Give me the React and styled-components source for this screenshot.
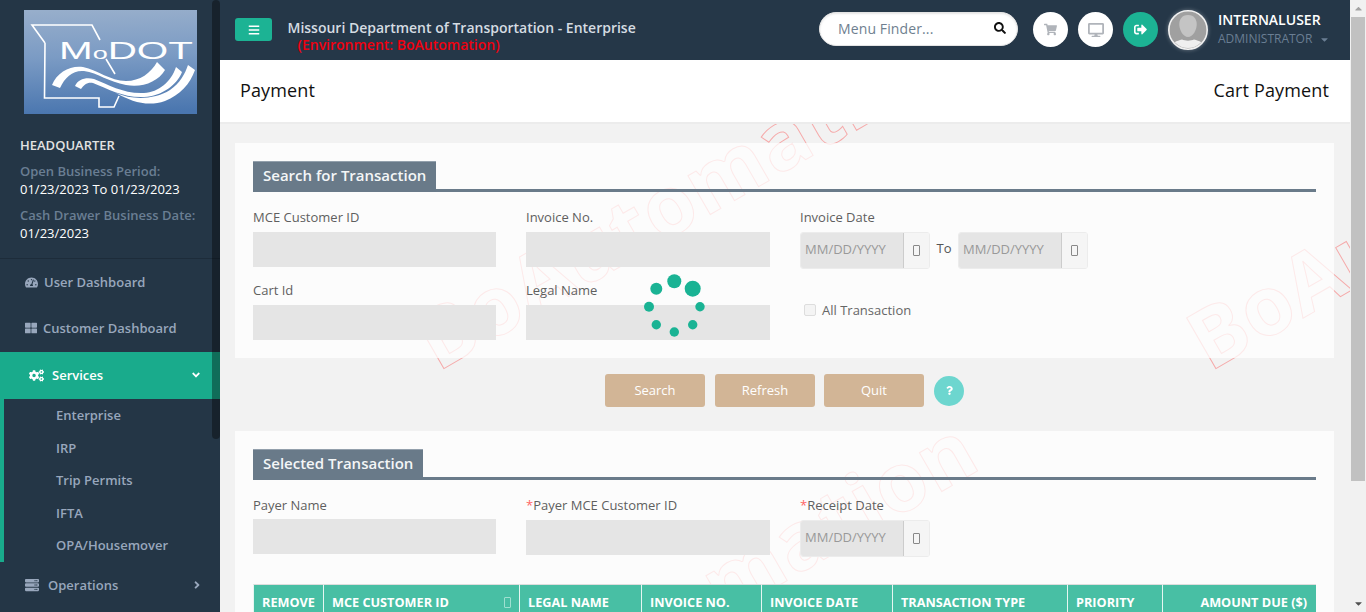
import React from "react";
import styled, { createGlobalStyle } from "styled-components";
import { FaTachometerAlt, FaThLarge, FaCogs, FaServer, FaAngleDown, FaAngleRight, FaBars, FaSearch, FaShoppingCart, FaDesktop, FaSignOutAlt, FaCaretDown, FaCaretUp, FaQuestion } from "react-icons/fa";

const Global = createGlobalStyle`
  html, body { margin: 0; padding: 0; height: 100%; overflow: hidden; }
  body { font-family: "Open Sans", "Liberation Sans", sans-serif; }
  * { box-sizing: border-box; }
`;

const Shell = styled.div`
  display: flex; width: 1366px; height: 612px; overflow: hidden; background: #f2f2f2;
`;

/* ---------- sidebar ---------- */
const Side = styled.aside`
  position: relative; flex: 0 0 220px; height: 612px; background: #243646; overflow: hidden;
`;
const SideScroll = styled.div`
  position: absolute; left: 212px; top: 0; width: 8px; height: 439px; z-index: 3;
  background: rgba(0,0,0,.36); border-radius: 4px;
`;
const LogoWrap = styled.div`
  padding: 10px 0 0 24px; height: 114px; line-height: 0;
`;
const Info = styled.div`
  padding: 21px 0 16px 20px; border-bottom: 1px solid #1d2c3a; height: 145px;
`;
const InfoHead = styled.div`
  font-size: 13px; font-weight: 600; color: #e2e2e2; line-height: 20px; margin-bottom: 7px; text-transform: uppercase;
`;
const InfoKey = styled.div`
  font-size: 13px; font-weight: 600; color: #6a7e93; line-height: 18px;
`;
const InfoVal = styled.div`
  font-size: 13px; color: #fff; line-height: 18px; margin-bottom: 8px;
`;
const NavItem = styled.div`
  display: flex; align-items: center; height: 46px; padding-left: 25px;
  font-size: 13px; font-weight: 600; color: #98a7bc;
  svg { flex: none; }
`;
const NavIconGap = styled.span`
  display: inline-flex; width: ${p => p.$w}px; flex: none;
`;
const ActiveItem = styled.div`
  display: flex; align-items: center; height: 47px; padding: 0 0 1px 29px; margin-top: 1px;
  background: #19ab8c; color: #fff; font-size: 13px; font-weight: 600;
`;
const Chevron = styled.span`
  margin-left: auto; margin-right: ${p => p.$mr}px; display: inline-flex; color: ${p => p.$c || "#fff"};
`;
const SubMenu = styled.div`
  border-left: 4px solid #19ab8c; height: 163px;
`;
const SubItem = styled.div`
  height: 32.5px; line-height: 32px; padding-left: 52px;
  font-size: 13px; font-weight: 600; color: #98a7bc;
`;

/* ---------- main ---------- */
const Main = styled.main`
  flex: 0 0 1130px; height: 612px; display: flex; flex-direction: column; overflow: hidden;
`;
const Top = styled.header`
  flex: 0 0 60px; height: 60px; background: #253748; display: flex; align-items: flex-start; padding-left: 15px;
`;
const BurgerBtn = styled.div`
  width: 37px; height: 23px; margin-top: 18px; border-radius: 3px; background: #1cb394; color: #fff;
  display: flex; align-items: center; justify-content: center; flex: none;
`;
const TitleBlock = styled.div`
  margin-left: 15.5px; padding-top: 18px; width: 531.5px; flex: none;
`;
const TitleLine = styled.div`
  font-size: 14px; font-weight: 600; line-height: 19px; color: #d5dce2; white-space: nowrap;
`;
const EnvLine = styled.div`
  font-size: 14px; font-weight: 600; line-height: 16px; color: #f0000f; padding-left: 10px; white-space: nowrap;
`;
const Finder = styled.div`
  width: 199px; height: 34px; margin-top: 12px; flex: none; background: #fff; border-radius: 17px;
  border: 1px solid #e4e4e4; display: flex; align-items: center; padding: 0 11px 2px 18px;
  font-size: 14px; color: #6f7f90; letter-spacing: .12px; box-shadow: inset 0 1px 2px rgba(0,0,0,.1);
`;
const FinderText = styled.span`
  flex: 1;
`;
const RoundBtn = styled.div`
  width: 35px; height: 35px; margin: 12px 0 0 ${p => p.$ml}px; border-radius: 50%; flex: none;
  background: ${p => p.$bg || "#fff"}; color: ${p => p.$c || "#b0b4ba"};
  display: flex; align-items: center; justify-content: center;
`;
const Avatar = styled.div`
  width: 40px; height: 40px; margin: 10px 0 0 10px; flex: none; line-height: 0;
  border-radius: 50%; box-shadow: 0 0 4px rgba(255,255,255,.35);
`;
const UserBlock = styled.div`
  margin-left: 10px; padding-top: 10px; width: 122px; flex: none;
`;
const UserName = styled.div`
  font-size: 14px; font-weight: 600; color: #fff; line-height: 20px;
`;
const UserRole = styled.div`
  display: flex; align-items: center; gap: 7px;
  font-size: 12px; color: #6a7e93; line-height: 18px;
`;
const TitleBar = styled.div`
  flex: 0 0 64px; height: 64px; background: #fff; border-bottom: 2px solid #ececec;
  display: flex; align-items: center; justify-content: space-between; padding: 0 21px 3px 20px;
  font-size: 18px; font-weight: 500; letter-spacing: .14px; color: #111; position: relative; z-index: 2;
`;
const Content = styled.div`
  position: relative; flex: 1; overflow: hidden; padding: 19px 16px 0 15px;
`;
const Watermark = styled.div`
  position: absolute; left: ${p => p.$x}px; top: ${p => p.$y}px; z-index: 0;
  transform-origin: 0 100%; transform: rotate(-30deg); white-space: nowrap;
  font: 700 82px/82px "Open Sans", sans-serif; letter-spacing: 1px;
  color: transparent; -webkit-text-stroke: 1px rgba(255,0,0,.3);
`;
const Card = styled.section`
  position: relative; z-index: 1; background: rgba(255,255,255,.74); padding: 18px 18px ${p => p.$pb || 18}px;
`;
const SectionHead = styled.div`
  height: 31px; display: flex; align-items: flex-start; border-bottom: 3px solid #6a7b8a; margin-bottom: 16px;
`;
const SectionTab = styled.h2`
  margin: 0; height: 31px; padding: 0 10px; background: #697a89; color: #f4f6f7;
  font-size: 15px; font-weight: 600; line-height: 27px; border-top: 1px solid #93a0ac; white-space: nowrap;
`;
const FieldGrid = styled.div`
  display: grid; grid-template-columns: 243px 244px 243px auto; column-gap: 30px; row-gap: 12px;
`;
const Field = styled.div`
  min-width: 0;
`;
const Label = styled.div`
  font-size: 13px; line-height: 18px; color: #5f5f5f; margin-bottom: 6px; white-space: nowrap;
`;
const Star = styled.span`
  color: #f66;
`;
const Input = styled.div`
  height: 35px; background: #e5e5e5; margin-top: ${p => p.$shift || 0}px;
`;
const DateRow = styled.div`
  display: flex; align-items: center;
`;
const DateBox = styled.div`
  width: 130px; height: 37px; display: flex; border-radius: 3px; overflow: hidden; border: 1px solid #ececec; flex: none;
`;
const DateInput = styled.div`
  width: 102px; background: #e5e5e5; color: #999; font-size: 13px; line-height: 33px; padding-left: 4px; white-space: nowrap;
`;
const DateAddon = styled.div`
  flex: 1; background: #f5f5f5; border-left: 1px solid #ccc; display: flex; align-items: center; justify-content: center;
`;
const Tofu = styled.span`
  display: block; width: 7px; height: 11px; border: 1px solid ${p => p.$c || "#888"}; border-radius: 1px;
`;
const ToText = styled.span`
  width: 28px; text-align: center; font-size: 13px; color: #555; flex: none; margin-top: -5px;
`;
const CheckRow = styled.div`
  display: flex; align-items: center; align-self: start; gap: 6px; padding: 21px 0 0 4px; font-size: 13px; color: #666; line-height: 16px;
`;
const Check = styled.span`
  width: 12px; height: 12px; border: 1px solid #ddd; border-radius: 2px; background: #f4f4f4; flex: none;
`;
const Actions = styled.div`
  position: relative; z-index: 1; display: flex; align-items: center; justify-content: center; gap: 10px; height: 33px; margin: 16px 0 24px;
`;
const Btn = styled.div`
  width: 100px; height: 33px; border-radius: 3px; background: #d2b596; color: #fff; font-size: 13px; padding-bottom: 2px;
  display: flex; align-items: center; justify-content: center; margin-right: ${p => p.$mr || 0}px;
`;
const Help = styled.div`
  width: 30px; height: 30px; border-radius: 50%; background: #6dd6cf; color: #fff;
  display: flex; align-items: center; justify-content: center;
`;
const TableGap = styled.div`
  height: 27px;
`;
const Table = styled.table`
  width: 1063px; table-layout: fixed; border-collapse: separate; border-spacing: 0;
`;
const Th = styled.th`
  height: 36px; background: #48bfa4; color: #fff; font-size: 12.7px; font-weight: 700; white-space: nowrap;
  text-transform: uppercase; padding: 0 ${p => p.$right ? 9 : 8}px 0 8px; text-align: ${p => p.$right ? "right" : "left"};
  border-left: 1px solid #e6f6f2; border-top: 1px solid #ddd; overflow: hidden; vertical-align: top; line-height: 35px;
`;
const ThInner = styled.div`
  display: flex; align-items: center; justify-content: space-between; height: 35px;
`;
const Spinner = styled.svg`
  position: absolute; left: 420px; top: 148px; z-index: 5; overflow: visible;
`;

/* ---------- window scrollbar ---------- */
const PageScroll = styled.div`
  flex: 0 0 16px; height: 612px; background: #f1f1f1; display: flex; flex-direction: column; padding-left: 1px;
`;
const ScrollArrow = styled.div`
  height: 17px; display: flex; align-items: center; justify-content: center; color: ${p => p.$c}; font-size: 11px;
  padding-right: 1px;
`;
const ScrollThumb = styled.div`
  width: 14px; height: 464px; background: #c1c1c1;
`;
const ScrollFill = styled.div`
  flex: 1;
`;

const MoDotLogo = () => (
  <svg width="173" height="104" viewBox="0 0 173 104">
    <defs>
      <linearGradient id="sky" x1="0.25" y1="0" x2="0.3" y2="1">
        <stop offset="0" stopColor="#97aecb" />
        <stop offset=".45" stopColor="#7b9bc4" />
        <stop offset="1" stopColor="#4a76af" />
      </linearGradient>
    </defs>
    <rect width="173" height="104" fill="url(#sky)" />
    <path d="M21 33 L8 15 L68 15 L76 30 M21 33 L20.5 88 L75 88 L75 97 L90 97 L95 86 M82 49 L91 64" fill="none" stroke="#fff" strokeWidth="1.6" />
    <text x="35" y="49" fill="#fff" fontFamily="Liberation Sans, sans-serif" fontSize="24" textLength="134" lengthAdjust="spacingAndGlyphs">
      M<tspan fontSize="16">o</tspan>DOT
    </text>
    <path d="M28 75 C33 62 47 55 59 57 C74 60 86 71 102 71 C116 71 127 63 133 52 L141 60 C134 72 118 78 102 75 C85 72 74 63 60 61 C49 60 41 67 36 78 Z" fill="#fff" />
    <path d="M51 76 C54 69 62 67 70 69 C85 75 100 84 120 83 C135 82 147 72 152 57 L158 62 C153 75 138 86 120 87 C100 88 84 79 69 73 C63 72 60 75 57 79 Z" fill="#fff" />
    <path d="M92 83 C108 90 130 90 146 80 C156 73 161 64 164 55 L171 60 C166 74 156 85 141 91 C124 97 108 92 92 83 Z" fill="#fff" />
  </svg>
);

const AvatarPic = () => (
  <svg width="40" height="40" viewBox="0 0 40 40">
    <defs>
      <clipPath id="av"><circle cx="20" cy="20" r="18" /></clipPath>
    </defs>
    <circle cx="20" cy="20" r="19.2" fill="#a0a0a0" stroke="#f1f1f1" strokeWidth="1.6" />
    <g clipPath="url(#av)">
      <path d="M20 5 C26.5 5 29 10 28.7 15 C28.4 20 25 27 20 27 C15 27 11.6 20 11.3 15 C11 10 13.5 5 20 5 Z" fill="#c4c4c4" />
      <path d="M2 40 C3 33 8 31 14 29.5 C17 31 23 31 26 29.5 C32 31 37 33 38 40 Z" fill="#efefef" />
    </g>
  </svg>
);

const dots = [
  [34.3, 9.3, 7], [52.7, 16.7, 8], [60, 34.7, 4.7], [52.7, 52.7, 4.7],
  [34.3, 60, 4.7], [16.3, 52.7, 4.7], [9, 34.7, 5], [16.3, 16.7, 6],
];

const nav = ["Enterprise", "IRP", "Trip Permits", "IFTA", "OPA/Housemover"];
const cols = [
  ["Remove", 70], ["MCE Customer ID", 196, "sort"], ["Legal Name", 122], ["Invoice No.", 120],
  ["Invoice Date", 131], ["Transaction Type", 175], ["Priority", 95], ["Amount Due ($)", 154, "right"],
];

const DatePick = () => (
  <DateBox>
    <DateInput>MM/DD/YYYY</DateInput>
    <DateAddon><Tofu /></DateAddon>
  </DateBox>
);

export default function App() {
  return (
    <Shell>
      <Global />
      <Side>
        <SideScroll />
        <LogoWrap><MoDotLogo /></LogoWrap>
        <Info>
          <InfoHead>Headquarter</InfoHead>
          <InfoKey>Open Business Period:</InfoKey>
          <InfoVal>01/23/2023 To 01/23/2023</InfoVal>
          <InfoKey>Cash Drawer Business Date:</InfoKey>
          <InfoVal>01/23/2023</InfoVal>
        </Info>
        <NavItem><FaTachometerAlt size={13} /><NavIconGap $w={6} />User Dashboard</NavItem>
        <NavItem><FaThLarge size={12} /><NavIconGap $w={6} />Customer Dashboard</NavItem>
        <ActiveItem>
          <FaCogs size={15} /><NavIconGap $w={8} />Services
          <Chevron $mr={18}><FaAngleDown size={12} /></Chevron>
        </ActiveItem>
        <SubMenu>{nav.map(n => <SubItem key={n}>{n}</SubItem>)}</SubMenu>
        <NavItem>
          <FaServer size={14} /><NavIconGap $w={9} />Operations
          <Chevron $mr={17} $c="#98a7bc"><FaAngleRight size={12} /></Chevron>
        </NavItem>
      </Side>
      <Main>
        <Top>
          <BurgerBtn><FaBars size={12} /></BurgerBtn>
          <TitleBlock>
            <TitleLine>Missouri Department of Transportation - Enterprise</TitleLine>
            <EnvLine>(Environment: BoAutomation)</EnvLine>
          </TitleBlock>
          <Finder><FinderText>Menu Finder...</FinderText><FaSearch size={12} color="#111" /></Finder>
          <RoundBtn $ml={15}><FaShoppingCart size={13} /></RoundBtn>
          <RoundBtn $ml={10}><FaDesktop size={16} /></RoundBtn>
          <RoundBtn $ml={10} $bg="#1cb394" $c="#fff"><FaSignOutAlt size={13} /></RoundBtn>
          <Avatar><AvatarPic /></Avatar>
          <UserBlock>
            <UserName>INTERNALUSER</UserName>
            <UserRole>ADMINISTRATOR<FaCaretDown size={11} /></UserRole>
          </UserBlock>
        </Top>
        <TitleBar><span>Payment</span><span>Cart Payment</span></TitleBar>
        <Content>
          <Watermark $x={222} $y={174}>BoAutomation</Watermark>
          <Watermark $x={994} $y={174}>BoAutomation</Watermark>
          <Watermark $x={240} $y={574}>BoAutomation</Watermark>
          <Card>
            <SectionHead><SectionTab>Search for Transaction</SectionTab></SectionHead>
            <FieldGrid>
              <Field><Label>MCE Customer ID</Label><Input /></Field>
              <Field><Label>Invoice No.</Label><Input /></Field>
              <Field>
                <Label>Invoice Date</Label>
                <DateRow><DatePick /><ToText>To</ToText><DatePick /></DateRow>
              </Field>
              <span />
              <Field><Label>Cart Id</Label><Input /></Field>
              <Field><Label>Legal Name</Label><Input /></Field>
              <CheckRow><Check />All Transaction</CheckRow>
            </FieldGrid>
          </Card>
          <Actions>
            <Btn>Search</Btn><Btn $mr={-1}>Refresh</Btn><Btn>Quit</Btn>
            <Help><FaQuestion size={9} /></Help>
          </Actions>
          <Card $pb={0}>
            <SectionHead><SectionTab>Selected Transaction</SectionTab></SectionHead>
            <FieldGrid>
              <Field><Label>Payer Name</Label><Input $shift={-1} /></Field>
              <Field><Label><Star>*</Star>Payer MCE Customer ID</Label><Input /></Field>
              <Field><Label><Star>*</Star>Receipt Date</Label><DatePick /></Field>
            </FieldGrid>
            <TableGap />
            <Table>
              <colgroup>{cols.map(c => <col key={c[0]} style={{ width: c[1] }} />)}</colgroup>
              <thead>
                <tr>
                  {cols.map(c => (
                    <Th key={c[0]} $right={c[2] === "right"}>
                      {c[2] === "sort" ? <ThInner>{c[0]}<Tofu $c="#9fe0d0" /></ThInner> : c[0]}
                    </Th>
                  ))}
                </tr>
              </thead>
            </Table>
          </Card>
          <Spinner width="70" height="70" viewBox="0 0 70 70">
            {dots.map((d, i) => <circle key={i} cx={d[0]} cy={d[1]} r={d[2]} fill="#1ab394" />)}
          </Spinner>
        </Content>
      </Main>
      <PageScroll>
        <ScrollArrow $c="#a3a3a3"><FaCaretUp size={11} /></ScrollArrow>
        <ScrollThumb />
        <ScrollFill />
        <ScrollArrow $c="#505050"><FaCaretDown size={11} /></ScrollArrow>
      </PageScroll>
    </Shell>
  );
}
